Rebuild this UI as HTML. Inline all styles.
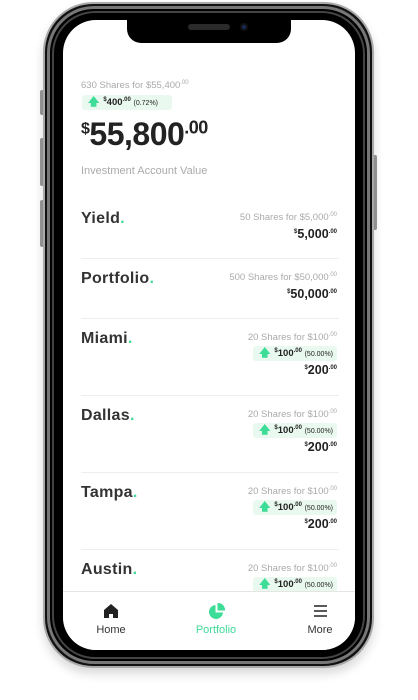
<!DOCTYPE html>
<html><head><meta charset="utf-8"><style>
*{margin:0;padding:0;box-sizing:border-box}
body{width:418px;height:700px;background:#fff;position:relative;overflow:hidden;font-family:"Liberation Sans",sans-serif}
.a{position:absolute}
sup{line-height:0}
.frame{left:43px;top:2px;width:331px;height:666px;border-radius:50px;background:#111;box-shadow:0 6px 10px rgba(0,0,0,.15);border:2px solid #aaa}
.f2{left:47px;top:6px;width:323px;height:658px;border-radius:47px;border:3px solid #777;background:#000}
.f3{left:52px;top:11px;width:313px;height:648px;border-radius:43px;border:2px solid #444;background:#000}
.screen{left:63px;top:20px;width:292px;height:630px;border-radius:33px;background:#fff;overflow:hidden}
.notch{left:127px;top:18px;width:164px;height:25px;background:#000;border-radius:0 0 14px 14px}
.btn{background:#999;border-radius:2px;width:4px}
.t{color:#333;font-weight:bold;font-size:16px;left:18px;letter-spacing:.3px}
.t i{color:#3ddc97;font-style:normal}
.sh{right:18px;font-size:9.5px;color:#aaa;text-align:right}
.sh sup,.v sup,.b sup{font-size:6px}
.v{right:18px;font-size:12.5px;font-weight:bold;color:#222}
.b{right:18px;height:15px;background:#e9f9f0;border-radius:3px;font-size:9.5px;font-weight:bold;color:#222;padding:0 4px 0 6px;line-height:15px;white-space:nowrap}
.b small{font-size:7px;font-weight:normal}
.b .ar{display:inline-block;color:#3ddc97;font-size:11px;margin-right:4px}
.sep{left:18px;right:16px;height:1px;background:#eee}
.nav{left:0;top:571px;width:292px;height:59px;border-top:1px solid #e5e5e5;background:#fff}
.nl{font-size:11px;color:#333;transform:translateX(-50%);top:32px}
</style></head><body>
<div class="a btn" style="left:40px;top:90px;height:25px"></div>
<div class="a btn" style="left:40px;top:138px;height:48px"></div>
<div class="a btn" style="left:40px;top:200px;height:47px"></div>
<div class="a btn" style="left:373px;top:155px;height:75px"></div>
<div class="a frame"></div><div class="a f2"></div><div class="a f3"></div>
<div class="a screen">
 <div class="a" style="left:18px;top:60px;font-size:9.5px;color:#aaa">630 Shares for $55,400<sup style="font-size:6px">.00</sup></div>
 <div class="a b" style="left:19px;right:auto;top:75px;width:90px"><span class="ar">🡅</span><sup>$</sup>400<sup>.00</sup> <small>(0.72%)</small></div>
 <div class="a" style="left:18px;top:96px;font-size:32px;font-weight:bold;color:#222;letter-spacing:-.5px"><sup style="font-size:16px">$</sup>55,800<sup style="font-size:18px">.00</sup></div>
 <div class="a" style="left:18px;top:145px;font-size:11px;color:#aaa">Investment Account Value</div>

 <div class="a t" style="top:190px">Yield<i>.</i></div>
 <div class="a sh" style="top:192px">50 Shares for $5,000<sup>.00</sup></div>
 <div class="a v" style="top:207px"><sup>$</sup>5,000<sup>.00</sup></div>
 <div class="a sep" style="top:238px"></div>

 <div class="a t" style="top:250px">Portfolio<i>.</i></div>
 <div class="a sh" style="top:252px">500 Shares for $50,000<sup>.00</sup></div>
 <div class="a v" style="top:267px"><sup>$</sup>50,000<sup>.00</sup></div>
 <div class="a sep" style="top:298px"></div>

 <div class="a t" style="top:310px">Miami<i>.</i></div>
 <div class="a sh" style="top:312px">20 Shares for $100<sup>.00</sup></div>
 <div class="a b" style="top:326px"><span class="ar">🡅</span><sup>$</sup>100<sup>.00</sup> <small>(50.00%)</small></div>
 <div class="a v" style="top:343px"><sup>$</sup>200<sup>.00</sup></div>
 <div class="a sep" style="top:375px"></div>

 <div class="a t" style="top:387px">Dallas<i>.</i></div>
 <div class="a sh" style="top:389px">20 Shares for $100<sup>.00</sup></div>
 <div class="a b" style="top:403px"><span class="ar">🡅</span><sup>$</sup>100<sup>.00</sup> <small>(50.00%)</small></div>
 <div class="a v" style="top:420px"><sup>$</sup>200<sup>.00</sup></div>
 <div class="a sep" style="top:452px"></div>

 <div class="a t" style="top:464px">Tampa<i>.</i></div>
 <div class="a sh" style="top:466px">20 Shares for $100<sup>.00</sup></div>
 <div class="a b" style="top:480px"><span class="ar">🡅</span><sup>$</sup>100<sup>.00</sup> <small>(50.00%)</small></div>
 <div class="a v" style="top:497px"><sup>$</sup>200<sup>.00</sup></div>
 <div class="a sep" style="top:529px"></div>

 <div class="a t" style="top:541px">Austin<i>.</i></div>
 <div class="a sh" style="top:543px">20 Shares for $100<sup>.00</sup></div>
 <div class="a b" style="top:557px"><span class="ar">🡅</span><sup>$</sup>100<sup>.00</sup> <small>(50.00%)</small></div>

 <div class="a nav">
  <svg class="a" style="left:41px;top:12px" width="14" height="14" viewBox="0 0 14 14"><path d="M7 0L0 6v8h5v-4h4v4h5V6z" fill="#222"/></svg>
  <div class="a nl" style="left:48px">Home</div>
  <svg class="a" style="left:145px;top:11px" width="17" height="17" viewBox="0 0 17 17"><path d="M7.5 2A7 7 0 1 0 15 9.5H7.5z" fill="#3ddc97"/><path d="M9.5 0A7 7 0 0 1 17 7.5H9.5z" fill="#3ddc97"/></svg>
  <div class="a nl" style="left:153px;color:#3ddc97">Portfolio</div>
  <svg class="a" style="left:251px;top:13px" width="13" height="12" viewBox="0 0 13 12"><path d="M0 1h13M0 6h13M0 11h13" stroke="#222" stroke-width="1.6"/></svg>
  <div class="a nl" style="left:257px">More</div>
 </div>
</div>
<div class="a notch"></div>
<div class="a" style="left:188px;top:24px;width:42px;height:6px;border-radius:3px;background:#2a2a2a"></div>
<div class="a" style="left:240px;top:23px;width:8px;height:8px;border-radius:50%;background:#1a2a55;border:2px solid #111"></div>
</body></html>
